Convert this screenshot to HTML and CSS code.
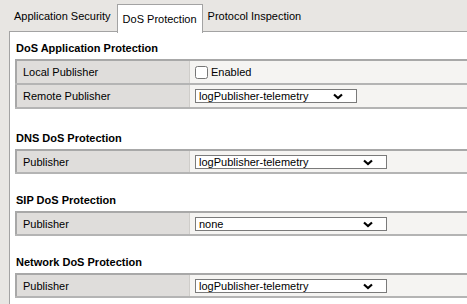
FILE: index.html
```html
<!DOCTYPE html>
<html lang="en">
<head>
    <meta charset="UTF-8">
    <title>DoS Protection</title>
    <link rel="stylesheet" href="styles.css">
</head>
<body>
    <div class="tabs">
        <a href="#" class="tab">Application Security</a>
        <a href="#" class="tab tab-current">DoS Protection</a>
        <a href="#" class="tab">Protocol Inspection</a>
    </div>
    <div class="panel">
        <div class="section section-first">
            <h3>DoS Application Protection</h3>
            <table class="props">
                <tr>
                    <td class="label">Local Publisher</td>
                    <td class="value"><label class="check"><input type="checkbox"> Enabled</label></td>
                </tr>
                <tr>
                    <td class="label">Remote Publisher</td>
                    <td class="value">
                        <span class="select short">
                            <select><option>logPublisher-telemetry</option></select>
                            <svg class="chev" width="10" height="7" viewBox="0 0 10 7"><path d="M1 1.5 L5 5 L9 1.5" fill="none" stroke="#000" stroke-width="2.2"/></svg>
                        </span>
                    </td>
                </tr>
            </table>
        </div>
        <div class="section">
            <h3>DNS DoS Protection</h3>
            <table class="props">
                <tr>
                    <td class="label">Publisher</td>
                    <td class="value">
                        <span class="select">
                            <select><option>logPublisher-telemetry</option></select>
                            <svg class="chev" width="10" height="7" viewBox="0 0 10 7"><path d="M1 1.5 L5 5 L9 1.5" fill="none" stroke="#000" stroke-width="2.2"/></svg>
                        </span>
                    </td>
                </tr>
            </table>
        </div>
        <div class="section">
            <h3>SIP DoS Protection</h3>
            <table class="props">
                <tr>
                    <td class="label">Publisher</td>
                    <td class="value">
                        <span class="select">
                            <select><option>none</option></select>
                            <svg class="chev" width="10" height="7" viewBox="0 0 10 7"><path d="M1 1.5 L5 5 L9 1.5" fill="none" stroke="#000" stroke-width="2.2"/></svg>
                        </span>
                    </td>
                </tr>
            </table>
        </div>
        <div class="section">
            <h3>Network DoS Protection</h3>
            <table class="props">
                <tr>
                    <td class="label">Publisher</td>
                    <td class="value">
                        <span class="select">
                            <select><option>logPublisher-telemetry</option></select>
                            <svg class="chev" width="10" height="7" viewBox="0 0 10 7"><path d="M1 1.5 L5 5 L9 1.5" fill="none" stroke="#000" stroke-width="2.2"/></svg>
                        </span>
                    </td>
                </tr>
            </table>
        </div>
    </div>
</body>
</html>
```

FILE: styles.css
```css
body {
    margin: 0;
    background: #e8e6e3;
    font-family: "Liberation Sans", Arial, sans-serif;
    font-size: 11px;
    color: #000;
    overflow: hidden;
    width: 467px;
    height: 304px;
}
.tabs {
    display: flex;
    margin-top: 4px;
    padding-left: 9px;
    height: 27px;
    position: relative;
    z-index: 1;
}
.tab {
    color: #000;
    text-decoration: none;
    padding: 6px 6px 0 5px;
    height: 21px;
}
.tab-current {
    background: #fff;
    border: 1px solid #a3a3a3;
    border-bottom: none;
    padding: 8px 5px 0 5px;
    height: 20px;
}
.panel {
    margin-left: 9px;
    border-left: 1px solid #a3a3a3;
    border-top: 1px solid #a3a3a3;
    background: #fff;
    padding: 10px 0 0 5px;
    width: 460px;
    height: 270px;
    overflow: hidden;
}
.section {
    margin-bottom: 20px;
}
.section-first {
    margin-bottom: 23px;
}
h3 {
    margin: 0 0 4px 1px;
    font-size: 11px;
    line-height: 13px;
    font-weight: bold;
}
.props {
    border-collapse: collapse;
    width: 460px;
    border-top: 2px solid #a8a8a8;
    border-left: 2px solid #a8a8a8;
    border-bottom: 2px solid #a8a8a8;
}
.props td {
    height: 21px;
    padding: 0;
    border-bottom: 2px solid #b4b4b4;
}
.section-first .props td {
    height: 22px;
}
.label {
    width: 166px;
    background: #dfdddb;
    padding-left: 6px !important;
    border-right: 1px solid #cfcdca;
}
.value {
    background: #f5f4f2;
    padding-left: 5px !important;
}
.check {
    display: flex;
    align-items: center;
}
.check input {
    margin: 0 3px 0 0;
    width: 13px;
    height: 13px;
}
.select {
    position: relative;
    display: inline-block;
    width: 192px;
    height: 14px;
    vertical-align: middle;
}
.select.short {
    width: 162px;
}
.select select {
    appearance: none;
    -webkit-appearance: none;
    width: 100%;
    height: 14px;
    border: 1px solid #7a7a7a;
    border-radius: 0;
    background: #fff;
    font-family: "Liberation Sans", Arial, sans-serif;
    font-size: 11px;
    padding: 0 0 0 3px;
    margin: 0;
    color: #000;
}
.chev {
    position: absolute;
    right: 14px;
    top: 4px;
}
```
